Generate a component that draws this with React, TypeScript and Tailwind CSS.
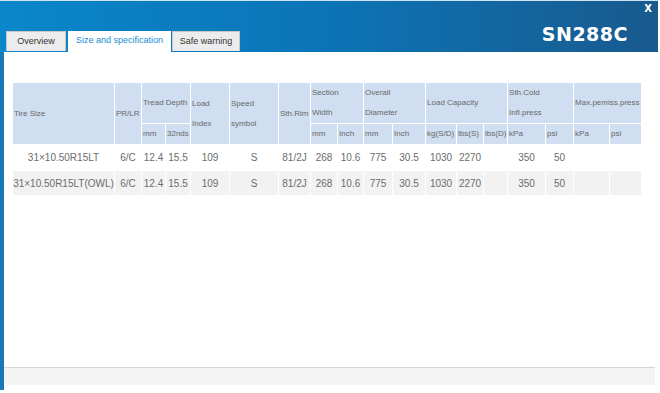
import React from "react";

const cols = [102, 27, 24, 25, 39, 49, 32, 27, 26, 29, 33, 31, 27, 24, 38, 28, 36, 32];

const rows = [
  ["31×10.50R15LT", "6/C", "12.4", "15.5", "109", "S", "81/2J", "268", "10.6", "775", "30.5", "1030", "2270", "", "350", "50", "", ""],
  ["31×10.50R15LT(OWL)", "6/C", "12.4", "15.5", "109", "S", "81/2J", "268", "10.6", "775", "30.5", "1030", "2270", "", "350", "50", "", ""],
];

const th = "bg-[#cfdef0] border border-white text-left align-middle font-normal px-[1px] text-[#686868] text-[8px] leading-[20px]";

export default function App() {
  return (
    <div className="w-[660px] h-[393px] bg-white relative overflow-hidden" style={{ fontFamily: '"Liberation Sans", Arial, sans-serif' }}>
      <div className="w-[658px] h-[52px] bg-linear-to-r from-[#0a87ca] via-[#0b74b6] to-[#175a8e] border-t border-[#cfe4f2] flex items-end pl-[6px] relative">
        <div className="flex items-end gap-[2px]">
          <div className="h-[20px] w-[60px] mb-[1px] bg-[#ececec] border border-[#c9c9c9] border-b-0 flex items-center justify-center text-[9px] text-[#333]">Overview</div>
          <div className="h-[21px] w-[103px] bg-white flex items-center justify-center text-[9px] text-[#1b8bd2] pb-[1px]">Size and specification</div>
          <div className="h-[20px] w-[68px] mb-[1px] -ml-[1px] bg-[#ececec] border border-[#c9c9c9] border-b-0 flex items-center justify-center text-[9px] text-[#333]">Safe warning</div>
        </div>
        <div className="absolute right-[30px] top-[21px] text-white font-bold text-[19px] leading-[24px] tracking-[0.5px]" style={{ fontFamily: '"DejaVu Sans", Verdana, sans-serif' }}>SN288C</div>
        <div className="absolute right-[6px] top-[2px] text-white font-bold text-[10px] leading-[12px]" style={{ fontFamily: '"DejaVu Sans", Verdana, sans-serif' }}>X</div>
      </div>
      <div className="w-[658px] h-[338px] border-l-4 border-[#1878b8] flex flex-col">
        <div className="flex-1 bg-white -mt-[1px] rounded-t-[4px] pt-[31px] pl-[8px] mr-[1px]">
          <table className="border-collapse table-fixed" style={{ width: 629 }}>
            <colgroup>
              {cols.map((w, i) => (
                <col key={i} style={{ width: w }} />
              ))}
            </colgroup>
            <thead>
              <tr className="h-[39px]">
                <th rowSpan={2} className={th}>Tire Size</th>
                <th rowSpan={2} className={th}>PR/LR</th>
                <th colSpan={2} className={th}>Tread Depth</th>
                <th rowSpan={2} className={th}>Load<br />Index</th>
                <th rowSpan={2} className={th}>Speed<br />symbol</th>
                <th rowSpan={2} className={th}>Sth.Rim</th>
                <th colSpan={2} className={th}>Section<br />Width</th>
                <th colSpan={2} className={th}>Overall<br />Diameter</th>
                <th colSpan={3} className={th}>Load Capacity</th>
                <th colSpan={2} className={th}>Sth.Cold<br />Infl.press</th>
                <th colSpan={2} className={th + " whitespace-nowrap"}>Max.pemiss.press</th>
              </tr>
              <tr className="h-[21px]">
                <th className={th}>mm</th>
                <th className={th}>32nds</th>
                <th className={th}>mm</th>
                <th className={th}>Inch</th>
                <th className={th}>mm</th>
                <th className={th}>Inch</th>
                <th className={th + " whitespace-nowrap"}>kg(S/D)</th>
                <th className={th + " whitespace-nowrap"}>lbs(S)</th>
                <th className={th + " whitespace-nowrap"}>lbs(D)</th>
                <th className={th}>kPa</th>
                <th className={th}>psi</th>
                <th className={th}>kPa</th>
                <th className={th}>psi</th>
              </tr>
            </thead>
            <tbody>
              {rows.map((r, ri) => (
                <tr key={ri} className={ri === 0 ? "h-[26px] bg-white" : "h-[25px] bg-[#f2f2f2]"}>
                  {r.map((c, ci) => (
                    <td key={ci} className="border border-white text-center align-middle text-[10px] text-[#6c6c6c] whitespace-nowrap px-0">
                      {c}
                    </td>
                  ))}
                </tr>
              ))}
            </tbody>
          </table>
        </div>
        <div className="h-[18px] bg-[#f4f4f4] border-t border-[#d6d6d6] mr-[3px]"></div>
        <div className="h-[5px] bg-white"></div>
      </div>
    </div>
  );
}
